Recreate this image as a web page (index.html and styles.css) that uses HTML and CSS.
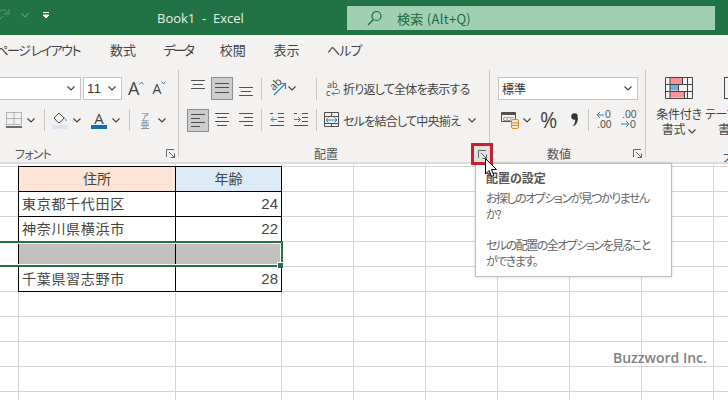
FILE: index.html
```html
<!DOCTYPE html>
<html lang="ja">
<head>
<meta charset="utf-8">
<title>Book1 - Excel</title>
<link rel="stylesheet" href="styles.css">
</head>
<body>
<div class="app">
  <header class="titlebar">
    <div class="qat">
      <svg class="redo" width="12" height="16" viewBox="0 0 12 16"><path d="M0 4c3-2 6-1 8 2M9 2v5H4M3 9l-3 3"/></svg>
      <svg class="chev faint ml-9" width="8" height="5" viewBox="0 0 8 5"><path d="M.5.5 4 4 7.500.5"/></svg>
      <svg class="qat-more ml-13" width="8" height="8" viewBox="0 0 8 8"><path d="M1 1.500h6M1 4l3 3 3-3z"/></svg>
    </div>
    <div class="doc-title">Book1&nbsp; -&nbsp; Excel</div>
    <div class="search">
      <svg class="search-ic" width="16" height="16" viewBox="0 0 16 16"><circle cx="9.500" cy="6" r="4.500"/><path d="M6.500 9.500 1 15"/></svg>
      <span class="search-text">検索 (Alt+Q)</span>
    </div>
  </header>

  <nav class="tabs">
    <span class="tab tab-first">ページ レイアウト</span>
    <span class="tab">数式</span>
    <span class="tab kana-tight">データ</span>
    <span class="tab">校閲</span>
    <span class="tab">表示</span>
    <span class="tab kana">ヘルプ</span>
  </nav>

  <section class="ribbon">
    <div class="group g-font">
      <div class="row">
        <div class="field f-name"><svg class="chev" width="8" height="5" viewBox="0 0 8 5"><path d="M.5.5 4 4 7.500.5"/></svg></div>
        <div class="field f-size ml-2"><span>11</span><svg class="chev" width="8" height="5" viewBox="0 0 8 5"><path d="M.5.5 4 4 7.500.5"/></svg></div>
        <span class="grow-a ml-6">A</span><svg class="caret" width="5" height="4" viewBox="0 0 5 4"><path d="M.5 3.500 2.500 1l2 2.500"/></svg>
        <span class="shrink-a ml-8">A</span><svg class="caret" width="5" height="4" viewBox="0 0 5 4"><path d="M.5.5l2 2.500 2-2.500"/></svg>
      </div>
      <div class="row row2">
        <svg class="ic ml-6" width="16" height="16" viewBox="0 0 16 16"><path class="dots" d="M.5.500h15v12H.5zM8 .5v12M.5 6.500h15"/><path d="M0 15h16" class="thick"/></svg>
        <svg class="chev ml-5" width="8" height="5" viewBox="0 0 8 5"><path d="M.5.5 4 4 7.500.5"/></svg>
        <i class="vsep ml-9"></i>
        <svg class="ic ml-7" width="16" height="18" viewBox="0 0 16 18"><path d="M2 7l5-5 5 5-4 4.500H6z"/><path class="blue" d="M12 7c1 0 2 1 2 3"/><rect class="underbar" x="0" y="14" width="16" height="4"/></svg>
        <svg class="chev ml-5" width="8" height="5" viewBox="0 0 8 5"><path d="M.5.5 4 4 7.500.5"/></svg>
        <div class="color-a ml-10"><span>A</span></div>
        <svg class="chev ml-5" width="8" height="5" viewBox="0 0 8 5"><path d="M.5.5 4 4 7.500.5"/></svg>
        <i class="vsep ml-9"></i>
        <div class="furi ml-10"><span class="furi-top">ア</span><span class="furi-base">亜</span></div>
        <svg class="chev ml-8" width="8" height="5" viewBox="0 0 8 5"><path d="M.5.5 4 4 7.500.5"/></svg>
      </div>
      <div class="foot"><span class="label l-font kana">フォント</span><svg class="launcher" width="9" height="9" viewBox="0 0 9 9"><path d="M.5 8V.5H8M3 3l5.500 5.500M8.500 4.500v4h-4"/></svg></div>
    </div>

    <div class="group g-align">
      <div class="row">
        <svg class="ic ml-12" width="14" height="23" viewBox="0 0 14 23"><path d="M0 3.500h14M2 7.500h10M0 11.500h14"/></svg>
        <div class="on ml-6"><svg class="ic" width="14" height="21" viewBox="0 0 14 21"><path d="M0 5.500h14M0 9.500h14M0 14.500h14"/></svg></div>
        <svg class="ic ml-6" width="14" height="23" viewBox="0 0 14 23"><path d="M0 10.500h14M2 14.500h10M0 18.500h14"/></svg>
        <i class="vsep ml-8"></i>
        <div class="orient ml-7"><span class="orient-ab">ab</span><svg class="orient-arrow" width="18" height="18" viewBox="0 0 18 18"><path d="M5 15 16 4M11 3.500h5.500V9"/></svg></div>
        <svg class="chev ml-1" width="8" height="5" viewBox="0 0 8 5"><path d="M.5.5 4 4 7.500.5"/></svg>
        <i class="vsep ml-20"></i>
        <svg class="wrap-ic ml-9" width="14" height="16" viewBox="0 0 14 16"><text x="1" y="7" class="svg-t">ab</text><text x="0" y="15" class="svg-t">c</text><path class="blue" d="M6 12.500h6c2 0 2-4 0-4H9M8 10.500l-2 2 2 2"/></svg>
        <span class="cmd ml-3">折り返して全体を表示する</span>
      </div>
      <div class="row row2">
        <div class="on ml-8"><svg class="ic" width="14" height="21" viewBox="0 0 14 21"><path d="M0 4.500h14M0 8.500h9M0 12.500h14M0 16.500h9"/></svg></div>
        <svg class="ic ml-6" width="14" height="24" viewBox="0 0 14 24"><path d="M0 5.500h14M2 9.500h10M0 13.500h14M2 17.500h10"/></svg>
        <svg class="ic ml-10" width="14" height="24" viewBox="0 0 14 24"><path d="M0 5.500h14M5 9.500h9M0 13.500h14M5 17.500h9"/></svg>
        <i class="vsep ml-8"></i>
        <svg class="ic ml-8" width="14" height="24" viewBox="0 0 14 24"><path d="M8 5.500h6M8 9.500h6M8 13.500h6M0 17.500h14M0 5.500h3"/><path class="blue" d="M7 11.500H1M3.500 9 1 11.500 3.500 14"/></svg>
        <svg class="ic ml-10" width="14" height="24" viewBox="0 0 14 24"><path d="M8 5.500h6M8 9.500h6M8 13.500h6M0 17.500h14M0 5.500h3"/><path class="blue" d="M0 11.500h6M4 9l2.500 2.500L4 14"/></svg>
        <i class="vsep ml-8"></i>
        <svg class="ic ml-7" width="15" height="16" viewBox="0 0 15 16"><path d="M.5.500h14v14H.5zM.5 4.500h14M.5 11.500h14M7.500.5v4M7.500 11.500v3"/><path class="blue" d="M2 8h11M4.500 5.500 2 8l2.500 2.500M10.500 5.500 13 8l-2.500 2.500"/></svg>
        <span class="cmd ml-4">セルを結合して中央揃え</span>
        <svg class="chev ml-8" width="8" height="5" viewBox="0 0 8 5"><path d="M.5.5 4 4 7.500.5"/></svg>
      </div>
      <div class="foot"><span class="label l-align">配置</span><div class="launcher-hot"><svg class="launcher" width="9" height="9" viewBox="0 0 9 9"><path d="M.5 8V.5H8M3 3l5.500 5.500M8.500 4.500v4h-4"/></svg></div></div>
    </div>

    <div class="group g-num">
      <div class="row">
        <div class="field f-format ml-8"><span>標準</span><svg class="chev" width="8" height="5" viewBox="0 0 8 5"><path d="M.5.5 4 4 7.500.5"/></svg></div>
      </div>
      <div class="row row2">
        <svg class="ic ml-11" width="18" height="18" viewBox="0 0 18 18"><path d="M.5 1.500h14v9H.5z"/><path d="M1 2.500h13v1H1z"/><text x="2" y="9.500" class="svg-xs">CCC</text><rect class="orange" x="10.500" y="8.500" width="7" height="9" rx="1.500"/><path class="orange" d="M10.500 12h7M10.500 14.500h7"/></svg>
        <svg class="chev ml-4" width="8" height="5" viewBox="0 0 8 5"><path d="M.5.5 4 4 7.500.5"/></svg>
        <span class="pct ml-9">%</span>
        <svg class="comma ml-14" width="7" height="14" viewBox="0 0 7 14"><circle cx="3.500" cy="3.500" r="3.200"/><path d="M4 5h2.800C7 9 5 12.500 1.500 13.500 4 11 4.500 8 4 5z"/></svg>
        <i class="vsep ml-10"></i>
        <svg class="dec ml-7" width="17" height="20" viewBox="0 0 17 20"><text x="9" y="8" class="svg-n">0</text><text x="1" y="18" class="svg-n">.00</text><path class="blue" d="M8 5H1M4 2 1 5l3 3"/></svg>
        <svg class="dec ml-8" width="17" height="20" viewBox="0 0 17 20"><text x="1" y="8" class="svg-n">.00</text><text x="9" y="18" class="svg-n">0</text><path class="blue" d="M0 14h8M5 11l3 3-3 3"/></svg>
      </div>
      <div class="foot"><span class="label l-num">数値</span><svg class="launcher" width="9" height="9" viewBox="0 0 9 9"><path d="M.5 8V.5H8M3 3l5.500 5.500M8.500 4.500v4h-4"/></svg></div>
    </div>

    <div class="group g-style">
      <div class="style-btns">
        <div class="big-btn">
          <svg class="cf" width="28" height="22" viewBox="0 0 28 22">
            <rect x="5" y="1" width="12" height="6" fill="#f8929a"/><rect x="5" y="7.500" width="8" height="6" fill="#6fb0e8"/><rect x="5" y="14.500" width="14" height="6" fill="#f8929a"/>
            <path d="M.5.500h27v21H.5zM.5 7.500h27M.5 14.500h27M5 .5v21M17.500.5v7M13.500 7.500v7M19.500 14.500v7M22.500.5v21" fill="none" stroke="#444"/>
          </svg>
          <span class="big-label">条件付き<br>書式<svg class="chev ml-3" width="8" height="5" viewBox="0 0 8 5"><path d="M.5.5 4 4 7.500.5"/></svg></span>
        </div>
        <div class="big-btn next">
          <div class="tb-ic"></div>
          <span class="big-label kana">テーブルとして<br><span class="indent">書式</span></span>
        </div>
      </div>
      <div class="foot"><span class="label l-style kana">スタイル</span></div>
    </div>
  </section>

  <main class="sheet">
    <table class="data">
      <tr class="head"><th class="orange-h">住所</th><th class="blue-h">年齢</th></tr>
      <tr><td>東京都千代田区</td><td class="num">24</td></tr>
      <tr><td>神奈川県横浜市</td><td class="num">22</td></tr>
      <tr class="blank"><td></td><td></td></tr>
      <tr><td>千葉県習志野市</td><td class="num">28</td></tr>
    </table>
    <div class="selection"><i class="handle"></i></div>
    <div class="watermark">Buzzword Inc.</div>
  </main>

  <aside class="tooltip">
    <h4>配置の設定</h4>
    <p>お探しのオプションが見つかりません<br>か?</p>
    <p>セルの配置の全オプションを見ること<br>ができます。</p>
  </aside>
  <svg class="cursor" width="13" height="20" viewBox="0 0 13 20"><path d="M.5.500v15.500l3.500-3.500 2.500 6 2.500-1-2.500-6h5z"/></svg>
</div>
</body>
</html>
```
FILE: styles.css
```css
* { box-sizing: border-box; }
html, body { margin: 0; padding: 0; }
body {
  width: 728px;
  height: 400px;
  overflow: hidden;
  background: #fff;
  font-family: "Noto Sans CJK JP", "Noto Sans", sans-serif;
  font-feature-settings: "palt";
  color: #444;
}
.app { position: relative; width: 728px; height: 400px; overflow: hidden; }

.ml-1 { margin-left: 1px; } .ml-2 { margin-left: 2px; } .ml-3 { margin-left: 3px; }
.ml-4 { margin-left: 4px; } .ml-5 { margin-left: 5px; } .ml-6 { margin-left: 6px; }
.ml-7 { margin-left: 7px; } .ml-8 { margin-left: 8px; } .ml-9 { margin-left: 9px; }
.ml-10 { margin-left: 10px; } .ml-11 { margin-left: 11px; } .ml-12 { margin-left: 12px; }
.ml-13 { margin-left: 13px; } .ml-14 { margin-left: 14px; } .ml-20 { margin-left: 20px; }
.kana { letter-spacing: -.8px; }
.kana-tight { letter-spacing: -2.500px; }

/* Title bar */
.titlebar {
  display: flex;
  align-items: flex-start;
  height: 35px;
  background: #217346;
  color: #fff;
}
.qat { display: flex; align-items: center; width: 157px; height: 30px; }
.redo { fill: none; stroke: #5f9a7c; flex: none; }
.chev.faint { stroke: #5f9a7c; }
.qat-more { stroke: #fff; fill: #fff; }
.doc-title { width: 190px; line-height: 36px; font-size: 13px; font-family: "Open Sans", sans-serif; color: #e6f0ea; }
.search {
  display: flex;
  align-items: center;
  width: 368px;
  height: 24px;
  margin-top: 6px;
  background: #a0cfb1;
  color: #1b6a40;
}
.search-ic { margin-left: 20px; fill: none; stroke: #1b6a40; stroke-width: 1.2; }
.search-text { margin-left: 14px; font-size: 13px; letter-spacing: .3px; }

/* Tabs */
.tabs {
  display: flex;
  gap: 27.500px;
  height: 35px;
  padding-bottom: 7px;
  align-items: center;
  background: #f3f2f1;
  font-size: 13px;
  color: #444;
}
.tab { white-space: nowrap; }
.tab-first { width: 80px; display: flex; justify-content: flex-end; margin-right: 2.500px; letter-spacing: -1.500px; }

/* Ribbon */
.ribbon {
  display: flex;
  height: 94px;
  background: #f3f2f1;
  border-bottom: 2px solid #dcdcdc;
}
.group { display: flex; flex-direction: column; padding-top: 7px; border-right: 1px solid #c8c6c4; height: 87px; flex: none; position: relative; }
.g-font { width: 179px; }
.g-align { width: 311px; }
.g-num { width: 156px; }
.g-style { width: 82px; height: 92px; border-right: 0; overflow: hidden; }
.row { display: flex; align-items: center; height: 23px; flex: none; }
.row2 { height: 24px; margin-top: 8px; }
.foot { display: flex; align-items: center; height: 18px; margin-top: 12px; position: relative; flex: none; }
.label { font-size: 12px; color: #555; white-space: nowrap; }
.l-font { margin-left: 15px; }
.l-align { margin-left: 135px; }
.l-num { margin-left: 57px; }
.l-style { margin-left: 76px; }
.launcher { fill: none; stroke: #666; flex: none; }
.g-font .launcher { margin-left: auto; margin-right: 3px; }
.g-num .launcher { margin-left: auto; margin-right: 3px; }
.launcher-hot {
  position: absolute;
  left: 292px;
  top: -1px;
  width: 22px;
  height: 22px;
  display: flex;
  align-items: center;
  justify-content: center;
  background: #e1e1e1;
  border: 3px solid #c8202c;
  z-index: 5;
}

.chev { fill: none; stroke: #444; stroke-width: 1.2; flex: none; }
.vsep { display: block; width: 1px; height: 22px; background: #c8c6c4; flex: none; }
.ic { fill: none; stroke: #505050; flex: none; }
.ic .blue, .wrap-ic .blue, .dec .blue { stroke: #2b88c8; fill: none; }
.ic .dots { stroke-dasharray: 1 1; stroke: #777; }
.ic .thick { stroke: #333; stroke-width: 1.4; }
.ic .underbar { fill: #dce6f1; stroke: none; }
.ic .orange { stroke: #d98a2b; fill: #fbe9cf; }

.field {
  display: flex;
  align-items: center;
  justify-content: space-between;
  height: 23px;
  background: #fff;
  border: 1px solid #c8c6c4;
  font-size: 13px;
  color: #333;
  padding: 0 5px 0 3px;
}
.f-name { width: 81px; border-left: 0; justify-content: flex-end; }
.f-size { width: 39px; font-family: "Liberation Sans", sans-serif; letter-spacing: .5px; }
.f-format { width: 140px; font-size: 12px; }
.grow-a { font: 18px/23px "Open Sans", sans-serif; color: #444; }
.shrink-a { font: 14px/23px "Open Sans", sans-serif; color: #444; }
.caret { fill: none; stroke: #2b88c8; margin-bottom: 11px; flex: none; }

.color-a { width: 16px; height: 18px; border-bottom: 4px solid #0f6cbd; display: flex; justify-content: center; font: 15px/14px "Open Sans", sans-serif; color: #444; }
.furi { width: 10px; display: flex; flex-direction: column; align-items: center; color: #777; }
.furi-top { font-size: 8px; line-height: 8px; }
.furi-base { font-size: 9px; line-height: 9px; }

.on { display: flex; justify-content: center; width: 22px; height: 23px; background: #cdcdcd; border: 1px solid #8e8e8e; flex: none; }
.orient { position: relative; width: 18px; height: 18px; flex: none; }
.orient-ab { position: absolute; left: 0; top: -3px; font: 11px/14px "Open Sans", sans-serif; color: #444; transform: rotate(-45deg); }
.orient-arrow { position: absolute; left: 0; top: 0; fill: none; stroke: #2b88c8; stroke-width: 1.2; }
.wrap-ic { flex: none; fill: none; }
.svg-t { font: 9px "Open Sans", sans-serif; fill: #444; stroke: none; }
.svg-xs { font: 5px "Liberation Sans", sans-serif; fill: #444; stroke: none; }
.svg-n { font: 10.500px "Liberation Sans", sans-serif; fill: #555; stroke: none; }
.cmd { font-size: 12px; letter-spacing: -.75px; color: #444; white-space: nowrap; }
.pct { font: 21px/24px "Open Sans", sans-serif; color: #444; width: 17px; }
.comma { fill: #333; flex: none; }
.dec { flex: none; fill: none; }

.style-btns { display: flex; flex: none; }
.big-btn { display: flex; flex-direction: column; align-items: center; width: 54px; margin-left: 6px; flex: none; }
.big-btn.next { width: 70px; padding-left: 0; align-items: flex-start; margin-left: -1px; }
.big-label { margin-top: 7px; font-size: 12px; line-height: 15px; letter-spacing: -.3px; text-align: center; white-space: nowrap; color: #444; }
.next .big-label { text-align: left; }
.indent { margin-left: 13px; }
.cf { flex: none; }
.tb-ic { width: 28px; height: 22px; margin-left: 19px; border: 1px solid #444; flex: none; }

/* Sheet */
.sheet {
  position: relative;
  height: 236px;
  padding: 2px 0 0 18px;
  background-color: #fff;
  background-image:
    linear-gradient(#d4d4d4, #d4d4d4), linear-gradient(#d4d4d4, #d4d4d4), linear-gradient(#d4d4d4, #d4d4d4),
    linear-gradient(#d4d4d4, #d4d4d4), linear-gradient(#d4d4d4, #d4d4d4), linear-gradient(#d4d4d4, #d4d4d4),
    linear-gradient(#d4d4d4, #d4d4d4), linear-gradient(#d4d4d4, #d4d4d4), linear-gradient(#d4d4d4, #d4d4d4),
    linear-gradient(#d4d4d4 1px, transparent 1px);
  background-size: 1px 100%, 1px 100%, 1px 100%, 1px 100%, 1px 100%, 1px 100%, 1px 100%, 1px 100%, 1px 100%, 100% 25px;
  background-position: 18px 0, 175px 0, 281px 0, 353px 0, 425px 0, 497px 0, 569px 0, 641px 0, 713px 0, 0 2px;
  background-repeat: no-repeat, no-repeat, no-repeat, no-repeat, no-repeat, no-repeat, no-repeat, no-repeat, no-repeat, repeat-y;
}
.data {
  border-collapse: collapse;
  table-layout: fixed;
  width: 264px;
  background: #fff;
  font-size: 14px;
  font-feature-settings: normal;
  color: #444;
}
.data th, .data td { height: 25px; padding: 0 3px 2px; border: 1px solid #000; font-weight: 400; white-space: nowrap; }
.data th:first-child, .data td:first-child { width: 157px; }
.data td:first-child { letter-spacing: .7px; }
.orange-h { background: #fce4d6; }
.blue-h { background: #ddebf7; }
.blank td { background: #c1c1c1; }
.num { text-align: right; font-family: "Liberation Sans", sans-serif; font-size: 15px; }
.selection {
  position: absolute;
  left: -3px;
  top: 77px;
  width: 286px;
  height: 26px;
  border: 2px solid #217346;
  box-shadow: inset 0 0 0 1px #fff;
  pointer-events: none;
}
.handle {
  position: absolute;
  right: -2px;
  bottom: -3px;
  width: 6px;
  height: 6px;
  background: #217346;
  border: 1px solid #fff;
  border-width: 1px 0 0 1px;
}
.watermark {
  position: absolute;
  left: 613px;
  top: 184px;
  font: 600 14px/20px "Open Sans", sans-serif;
  color: #808080;
}

/* Tooltip */
.tooltip {
  position: absolute;
  left: 475px;
  top: 163px;
  width: 197px;
  height: 114px;
  padding: 5px 10px;
  background: #fff;
  border: 1px solid #bdbdbd;
  box-shadow: 0 0 3px rgba(0, 0, 0, .15);
  font-size: 12px;
  color: #666;
}
.tooltip h4 { margin: 0; font-size: 12px; line-height: 18px; font-weight: 700; color: #555; }
.tooltip p { margin: 3px 0 15px; line-height: 16px; letter-spacing: -1.500px; white-space: nowrap; }
.cursor { position: absolute; left: 485px; top: 158px; fill: #fff; stroke: #000; z-index: 6; }
```
